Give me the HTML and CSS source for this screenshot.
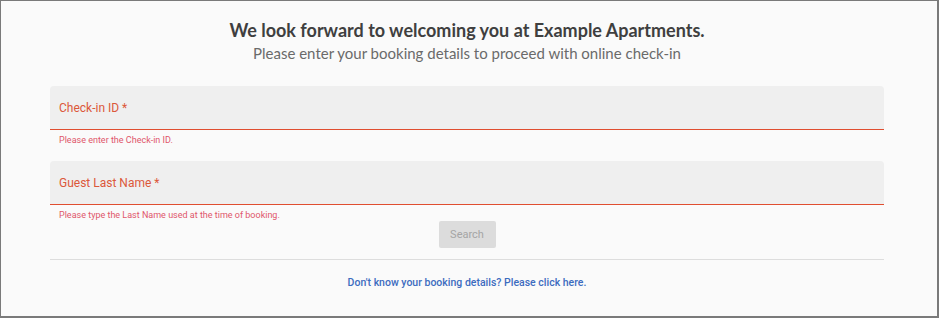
FILE: index.html
```html
<!DOCTYPE html>
<html lang="en">
<head>
    <meta charset="UTF-8">
    <title>Online check-in</title>
    <link rel="stylesheet" href="styles.css">
</head>
<body>
    <div class="frame">
        <div class="intro">
            <h1 class="welcome">We look forward to welcoming you at Example Apartments.</h1>
            <p class="lead">Please enter your booking details to proceed with online check-in</p>
        </div>
        <form class="checkin">
            <div class="field">
                <label class="field-label">Check-in ID *</label>
            </div>
            <div class="hint">Please enter the Check-in ID.</div>
            <div class="field">
                <label class="field-label">Guest Last Name *</label>
            </div>
            <div class="hint hint-last">Please type the Last Name used at the time of booking.</div>
            <div class="actions">
                <button type="button" class="btn-search" disabled>Search</button>
            </div>
            <div class="help">
                <a href="#" class="help-link">Don't know your booking details? Please click here.</a>
            </div>
        </form>
    </div>
</body>
</html>
```

FILE: styles.css
```css
body {
    margin: 0;
    background-color: #fafafa;
}

div.frame {
    box-sizing: border-box;
    width: 939px;
    height: 318px;
    background-color: #fafafa;
    border-top: 1px solid #7a7a7a;
    border-left: 1px solid #7a7a7a;
    border-right: 2px solid #7a7a7a;
    border-bottom: 2px solid #7a7a7a;
    padding: 0 53px 0 49px;
}

div.frame div.intro {
    text-align: center;
    padding-top: 18px;
    font-family: 'Lato', 'Open Sans', sans-serif;
}

div.intro h1.welcome {
    margin: 0;
    font-size: 18px;
    line-height: 23px;
    font-weight: 700;
    color: #3f3f3f;
}

div.intro p.lead {
    margin: 0;
    font-size: 15px;
    line-height: 22px;
    font-weight: 400;
    color: #6a6a6a;
}

form.checkin {
    margin-top: 22px;
    font-family: 'Roboto', sans-serif;
}

form.checkin div.field {
    height: 43px;
    background-color: #efefef;
    border-bottom: 1px solid #e04e30;
    border-radius: 4px 4px 0 0;
    padding-left: 9px;
    display: flex;
    align-items: center;
}

form.checkin div.field label.field-label {
    font-size: 12px;
    color: #dc583a;
    margin-top: 1px;
}

form.checkin div.hint {
    font-size: 9px;
    color: #e0566a;
    padding: 5px 0 0 9px;
    height: 26px;
}

form.checkin div.hint-last {
    height: auto;
    padding-top: 5px;
}

div.actions {
    display: flex;
    justify-content: center;
    padding-top: 1px;
    padding-bottom: 11px;
    border-bottom: 1px solid #dddddd;
}

button.btn-search {
    width: 57px;
    height: 27px;
    border: none;
    border-radius: 2px;
    background-color: #dcdcdc;
    color: #a5a5a5;
    font-family: 'Roboto', sans-serif;
    font-size: 11px;
    padding: 0;
}

div.help {
    text-align: center;
    padding-top: 11px;
}

a.help-link {
    font-size: 10.5px;
    font-weight: 500;
    color: #3d6cbf;
    text-decoration: none;
}
```
